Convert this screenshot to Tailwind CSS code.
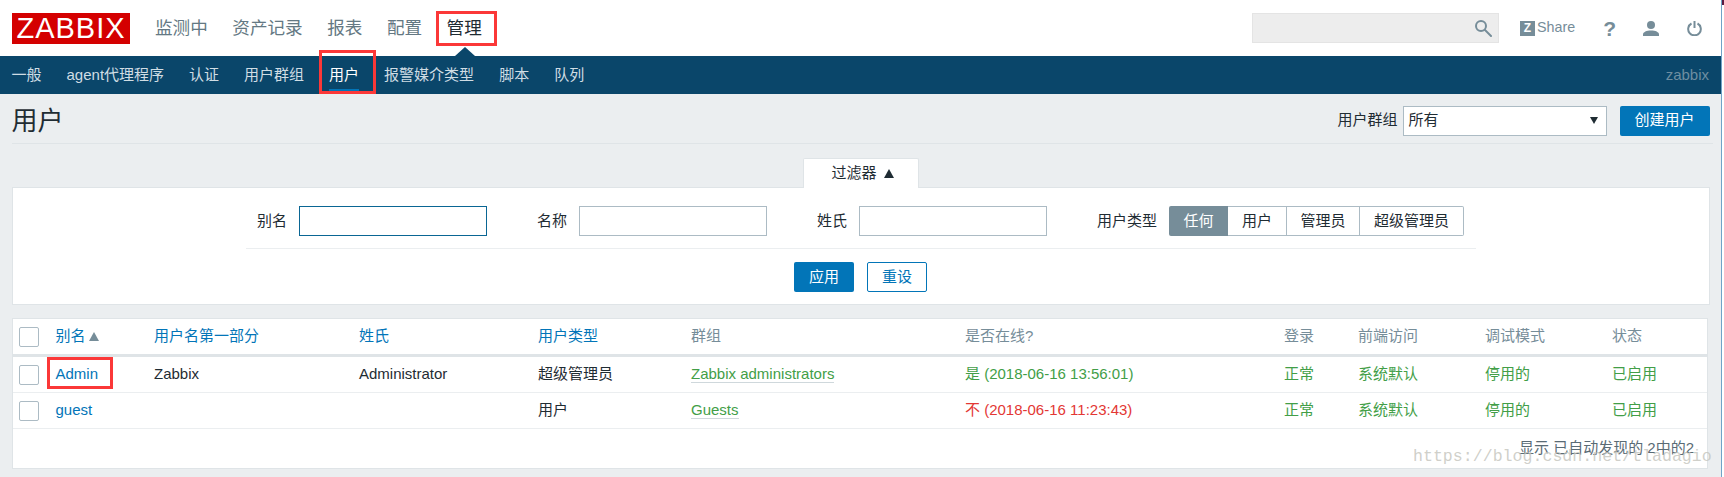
<!doctype html>
<html>
<head>
<meta charset="utf-8">
<script src="https://cdn.jsdelivr.net/npm/@tailwindcss/browser@4"></script>
</head>
<body class="bg-white">
<div class="relative h-[477px] w-[1724px] overflow-hidden bg-[#ebeef0] text-[15px] text-[#1f2c33] font-['Liberation_Sans','Noto_Sans_CJK_SC',sans-serif]">
  <!-- top bar -->
  <header class="flex h-[56px] items-center bg-white pl-[12px] pr-[22px]">
    <div class="flex h-[31px] w-[118px] items-center justify-center bg-[#d40000] text-[29px] leading-none tracking-[1px] text-white">ZABBIX</div>
    <nav class="ml-[25px] flex gap-[24.500px] text-[17.6px] text-[#647883]">
      <span>监测中</span><span>资产记录</span><span>报表</span><span>配置</span><span class="text-[#1f2c33]">管理</span>
    </nav>
    <div class="ml-auto flex h-[30px] w-[247px] items-center justify-end border border-[#e4e4e4] bg-[#ededed] pr-[6px]">
      <svg width="18" height="18" viewBox="0 0 18 18" fill="none" stroke="#768d99" stroke-width="2"><circle cx="7" cy="7" r="5"/><path d="M11 11l6 6" stroke-linecap="round"/></svg>
    </div>
    <div class="ml-[21px] flex items-center">
      <span class="flex h-[15px] w-[15px] items-center justify-center bg-[#768d99] text-[12px] font-bold leading-none text-white">Z</span>
      <span class="ml-[2px] text-[14.3px] text-[#768d99]">Share</span>
    </div>
    <span class="ml-[28px] text-[21px] font-bold leading-none text-[#768d99]">?</span>
    <svg class="ml-[27px]" width="16" height="15" viewBox="0 0 16 15" fill="#768d99"><circle cx="8" cy="4" r="4"/><path d="M0 15v-1.500c0-2.500 3.500-4 8-4s8 1.500 8 4v1.500z"/></svg>
    <svg class="ml-[28px]" width="15" height="15" viewBox="0 0 15 15" fill="none" stroke="#768d99" stroke-width="2"><path d="M4.500 2.500a6.300 6.300 0 1 0 6 0"/><path d="M7.500 0v7"/></svg>
  </header>
  <!-- sub nav -->
  <div class="flex h-[38px] items-center bg-[#0a466a] pl-[11.500px] pr-[15px] text-[#d0dde4]">
    <div class="flex gap-[25px]">
      <span>一般</span><span>agent代理程序</span><span>认证</span><span>用户群组</span>
      <span class="relative text-white">用户<span class="absolute bottom-[-5px] left-0 h-[2px] w-full bg-[#0275b8]"></span></span>
      <span>报警媒介类型</span><span>脚本</span><span>队列</span>
    </div>
    <span class="ml-auto text-[#6e8ea1]">zabbix</span>
  </div>
  <!-- title row -->
  <div class="mx-[11.500px] flex h-[50px] items-center justify-between border-b border-[#dfe4e7] pr-[3px] pt-[4px]">
    <h1 class="text-[26px] font-normal leading-none">用户</h1>
    <div class="flex items-center">
      <span>用户群组</span>
      <div class="ml-[5px] flex h-[30px] w-[204px] items-center justify-between border border-[#acbbc4] bg-white pl-[5px] pr-[8px]"><span>所有</span><span class="h-0 w-0 border-x-[4px] border-t-[7px] border-x-transparent border-t-[#1f2c33]"></span></div>
      <button class="ml-[13px] h-[30px] w-[90px] rounded-[2px] bg-[#0275b8] text-white">创建用户</button>
    </div>
  </div>
  <!-- filter -->
  <div class="mt-[14px] flex h-[30px] justify-center">
    <div class="ml-[-2px] flex w-[116px] items-center justify-center gap-[7px] rounded-t-[2px] border-x border-t border-[#dfe4e7] bg-white pl-[3px]">
      <span>过滤器</span><span class="h-0 w-0 border-x-[5px] border-b-[9px] border-x-transparent border-b-[#1f2c33]"></span>
    </div>
  </div>
  <section class="ml-[12px] mr-[14px] mt-[-1px] h-[118px] border border-[#dfe4e7] bg-white">
    <div class="mx-[233px] mt-[18px] flex h-[43px] border-b border-[#ebeef0] pb-[13px]">
      <label class="ml-[11px] flex h-[30px] items-center">别名</label>
      <div class="ml-[12px] h-[30px] w-[188px] border border-[#0a6694]"></div>
      <label class="ml-[50px] flex h-[30px] items-center">名称</label>
      <div class="ml-[12px] h-[30px] w-[188px] border border-[#acbbc4]"></div>
      <label class="ml-[50px] flex h-[30px] items-center">姓氏</label>
      <div class="ml-[12px] h-[30px] w-[188px] border border-[#acbbc4]"></div>
      <label class="ml-[50px] flex h-[30px] items-center">用户类型</label>
      <div class="ml-[12px] flex h-[30px]">
        <span class="flex w-[59px] items-center justify-center rounded-l-[2px] bg-[#768d99] text-white">任何</span>
        <span class="flex w-[59px] items-center justify-center border-y border-r border-[#acbbc4]">用户</span>
        <span class="flex w-[73px] items-center justify-center border-y border-r border-[#acbbc4]">管理员</span>
        <span class="flex w-[104px] items-center justify-center rounded-r-[2px] border-y border-r border-[#acbbc4]">超级管理员</span>
      </div>
    </div>
    <div class="mt-[13px] flex justify-center gap-[13px] pr-[1px]">
      <button class="h-[30px] w-[60px] rounded-[2px] bg-[#0275b8] text-white">应用</button>
      <button class="h-[30px] w-[60px] rounded-[2px] border border-[#0275b8] bg-white text-[#0275b8]">重设</button>
    </div>
  </section>
  <!-- table -->
  <section class="ml-[12px] mr-[16px] mt-[13px] h-[151px] border border-[#dfe4e7] bg-white">
    <div class="grid h-[38px] grid-cols-[36.500px_98.500px_205px_179px_153px_274px_319px_74px_127px_127px_1fr] items-center border-b-[3px] border-[#dfe4e7] pl-[6px] text-[#768d99]">
      <span class="h-[20px] w-[20px] rounded-[2px] border border-[#acbbc4]"></span>
      <span class="flex items-center gap-[3px] text-[#0275b8]">别名<span class="h-0 w-0 border-x-[5px] border-b-[9px] border-x-transparent border-b-[#768d99]"></span></span>
      <span class="text-[#0275b8]">用户名第一部分</span>
      <span class="text-[#0275b8]">姓氏</span>
      <span class="text-[#0275b8]">用户类型</span>
      <span>群组</span><span>是否在线?</span><span>登录</span><span>前端访问</span><span>调试模式</span><span>状态</span>
    </div>
    <div class="grid h-[36px] grid-cols-[36.500px_98.500px_205px_179px_153px_274px_319px_74px_127px_127px_1fr] items-center border-b border-[#ebeef0] pl-[6px] text-[#429e47]">
      <span class="h-[20px] w-[20px] rounded-[2px] border border-[#acbbc4]"></span>
      <span class="text-[#0275b8]">Admin</span>
      <span class="text-[#1f2c33]">Zabbix</span>
      <span class="text-[#1f2c33]">Administrator</span>
      <span class="text-[#1f2c33]">超级管理员</span>
      <span><span class="border-b border-[#cfd8dc]">Zabbix administrators</span></span>
      <span>是 (2018-06-16 13:56:01)</span>
      <span>正常</span><span>系统默认</span><span>停用的</span><span>已启用</span>
    </div>
    <div class="grid h-[36px] grid-cols-[36.500px_98.500px_205px_179px_153px_274px_319px_74px_127px_127px_1fr] items-center border-b border-[#ebeef0] pl-[6px] text-[#429e47]">
      <span class="h-[20px] w-[20px] rounded-[2px] border border-[#acbbc4]"></span>
      <span class="text-[#0275b8]">guest</span>
      <span></span>
      <span></span>
      <span class="text-[#1f2c33]">用户</span>
      <span><span class="border-b border-[#cfd8dc]">Guests</span></span>
      <span class="text-[#e33734]">不 (2018-06-16 11:23:43)</span>
      <span>正常</span><span>系统默认</span><span>停用的</span><span>已启用</span>
    </div>
    <div class="mt-[8px] pr-[13px] text-right text-[#5a6b75]">显示 已自动发现的 2中的2</div>
  </section>
  <!-- annotations -->
  <div class="absolute left-[436px] top-[11px] h-[35px] w-[61px] border-[3px] border-[#fb3838]"></div>
  <div class="absolute left-[319px] top-[50px] h-[44px] w-[57px] border-[3px] border-[#fb3838]"></div>
  <div class="absolute left-[47px] top-[357px] h-[32px] w-[66px] border-[3px] border-[#fb3838]"></div>
  <div class="absolute left-[455px] top-[47px] h-0 w-0 border-x-[10px] border-b-[9px] border-x-transparent border-b-[#0a466a]"></div>
  <div class="absolute left-[1413px] top-[447px] font-['Liberation_Mono',monospace] text-[16.6px] leading-[20px] text-[#c4c4bc]/80">https://blog.csdn.net/tladagio</div>
  <!-- window edge from the captured screen -->
  <div class="absolute right-0 top-0 h-full w-[3px] border-l border-[#6fa3c8] bg-white"></div>
  <div class="absolute right-0 top-0 h-[5px] w-[2px] bg-[#5c1a40]"></div>
</div>
</body>
</html>
